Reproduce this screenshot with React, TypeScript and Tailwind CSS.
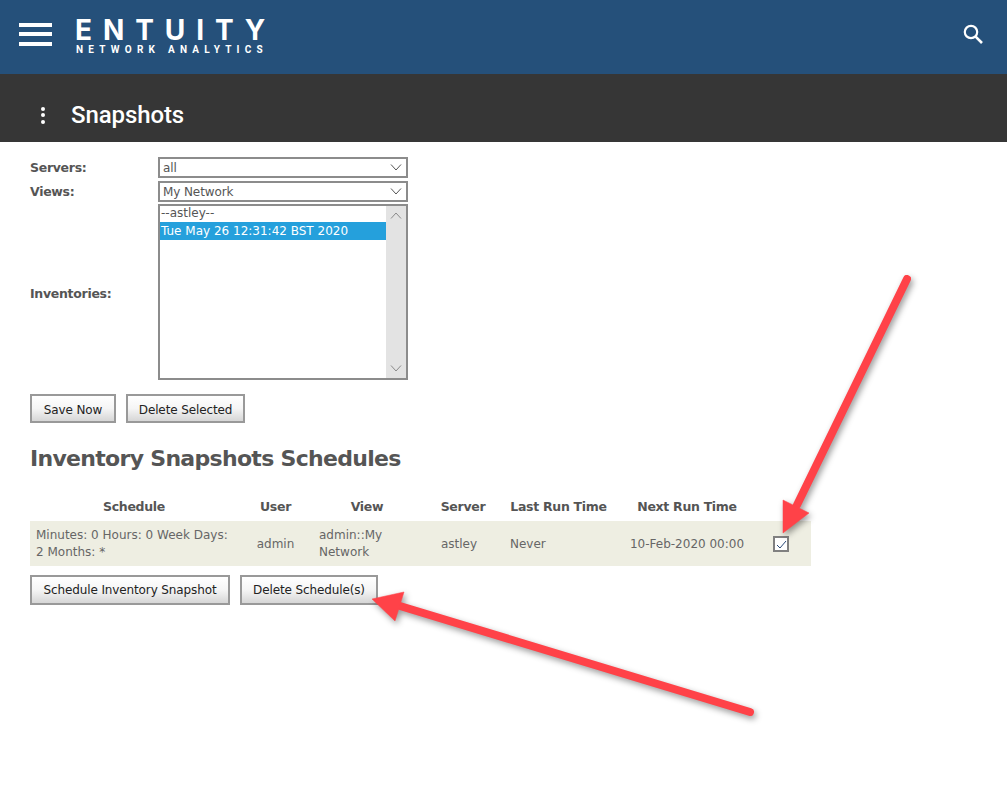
import React from "react";

const font = "font-['DejaVu_Sans','Liberation_Sans',sans-serif]";

function Chevron({ up = false, color = "#555" }: { up?: boolean; color?: string }) {
  return (
    <svg width="12" height="7" viewBox="0 0 12 7" fill="none" stroke={color} strokeWidth="1">
      <path d={up ? "M1 6.5 L6 1 L11 6.5" : "M1 .5 L6 6 L11 .5"} />
    </svg>
  );
}

function Select({ value }: { value: string }) {
  return (
    <div className="flex h-[21px] w-[250px] items-center justify-between border-2 border-[#8c8c8c] pl-[3px] pr-[4px] text-[12px] tracking-[-0.1px] text-[#555]">
      <span>{value}</span>
      <Chevron />
    </div>
  );
}

function Btn({ children, className }: { children: React.ReactNode; className: string }) {
  return (
    <button className={`flex items-center justify-center border-2 border-[#999] bg-gradient-to-b from-white via-[#f5f5f5] to-[#d6d6d6] text-[12px] tracking-[-0.12px] text-[#222] ${className}`}>
      {children}
    </button>
  );
}

const headers = ["Schedule", "User", "View", "Server", "Last Run Time", "Next Run Time", ""];

const cols = "grid grid-cols-[208px_75px_108px_84px_107px_150px_49px]";
const label = "w-[128px] pt-[2px] text-[12.5px] font-bold tracking-[-0.3px] text-[#555]";

export default function App() {
  return (
    <div className={`relative h-[792px] w-[1007px] overflow-hidden bg-white ${font}`}>
      <header className="flex h-[74px] items-center justify-between bg-[#25507a] pl-[19px] pr-[22px]">
        <div className="flex items-center">
          <div className="mb-[6px] flex w-[33px] flex-col gap-[5.5px]">
            <div className="h-[4px] bg-white" />
            <div className="h-[4px] bg-white" />
            <div className="h-[4px] bg-white" />
          </div>
          <div className="ml-[23px] flex flex-col font-['Inter',sans-serif] text-white">
            <div className="text-[28px] font-bold leading-[20px] tracking-[10.9px]">ENTUITY</div>
            <div className="ml-px mt-[6px] font-['Roboto',sans-serif] text-[10px] font-bold leading-[8px] tracking-[5.25px]">NETWORK ANALYTICS</div>
          </div>
        </div>
        <svg width="24" height="24" viewBox="0 0 24 24" fill="none" stroke="white" strokeWidth="2.2" className="mt-[-6px]">
          <circle cx="10" cy="10" r="6.2" />
          <path d="M14.6 14.6 L21 21" strokeWidth="2.6" />
        </svg>
      </header>

      <div className="flex h-[68px] items-center bg-[#363636] pl-[40px] pt-[14px] font-['Roboto',sans-serif] text-white">
        <div className="flex w-[6px] flex-col items-center gap-[2.5px]">
          <div className="h-[4px] w-[4px] rounded-full bg-white" />
          <div className="h-[4px] w-[4px] rounded-full bg-white" />
          <div className="h-[4px] w-[4px] rounded-full bg-white" />
        </div>
        <div className="ml-[25px] text-[24px] font-medium leading-none tracking-[-0.1px]">Snapshots</div>
      </div>

      <main className="pl-[30px] pt-[15px]">
        <div className="flex h-[21px] items-center">
          <div className={label}>Servers:</div>
          <Select value="all" />
        </div>
        <div className="mt-[3px] flex h-[21px] items-center">
          <div className={label}>Views:</div>
          <Select value="My Network" />
        </div>
        <div className="mt-[2px] flex h-[176px] items-center">
          <div className={`${label} pt-[4px]`}>Inventories:</div>
          <div className="flex h-[176px] w-[250px] border-2 border-[#8c8c8c] text-[12px]">
            <div className="flex-1">
              <div className="h-[16px] pl-[1px] leading-[15px] text-[#555]">--astley--</div>
              <div className="h-[18px] bg-[#25a0dc] pl-[1px] leading-[18px] text-white">Tue May 26 12:31:42 BST 2020</div>
            </div>
            <div className="flex w-[20px] flex-col items-center justify-between bg-[#e3e3e3] py-[6px]">
              <Chevron up color="#8a8a8a" />
              <Chevron color="#8a8a8a" />
            </div>
          </div>
        </div>

        <div className="mt-[14px] flex gap-[10px]">
          <Btn className="h-[29px] w-[86px] pt-[2px]">Save Now</Btn>
          <Btn className="h-[29px] w-[119px] pt-[2px]">Delete Selected</Btn>
        </div>

        <h2 className="mt-[20px] text-[22px] font-bold leading-[32px] tracking-[-0.7px] text-[#555]">Inventory Snapshots Schedules</h2>

        <div className={`${cols} mt-[14px] h-[32px] w-[781px] pt-[4px] text-[12.5px] font-bold tracking-[-0.3px] text-[#555]`}>
          {headers.map((h, i) => (
            <div key={i} className="flex items-center justify-center">{h}</div>
          ))}
        </div>
        <div className={`${cols} h-[45px] w-[781px] bg-[#eeeee2] pt-px text-[12px] leading-[17px] text-[#666]`}>
          <div className="flex items-center pl-[6px]">
            <span>Minutes: 0 Hours: 0 Week Days: 2 Months: *</span>
          </div>
          <div className="flex items-center justify-center">admin</div>
          <div className="flex items-center pl-[6px] pr-[30px]">admin::My Network</div>
          <div className="flex items-center justify-center pr-[8px]">astley</div>
          <div className="flex items-center pl-[5px]">Never</div>
          <div className="flex items-center justify-center">10-Feb-2020 00:00</div>
          <div className="flex items-center pl-[11px]">
            <div className="flex h-[16px] w-[16px] items-center justify-center border-2 border-[#808080] bg-white">
              <svg width="11" height="9" viewBox="0 0 11 9" fill="none" stroke="#2a4a78" strokeWidth="1">
                <path d="M1 5 L4 8 L10 1" />
              </svg>
            </div>
          </div>
        </div>

        <div className="mt-[9px] flex gap-[10px]">
          <Btn className="h-[30px] w-[200px]">Schedule Inventory Snapshot</Btn>
          <Btn className="h-[30px] w-[138px]">Delete Schedule(s)</Btn>
        </div>
      </main>

      <svg className="pointer-events-none absolute left-0 top-0" width="1007" height="792" viewBox="0 0 1007 792" style={{ filter: "drop-shadow(2px 3px 3px rgba(0,0,0,0.4))" }}>
        <g fill="#ff4248" stroke="#ff4248">
          <path d="M907 279 L797 505" strokeWidth="8" strokeLinecap="round" fill="none" />
          <path d="M783 533 L783 500 L809 513 Z" strokeWidth="0.5" />
          <path d="M750 712 L400 606" strokeWidth="8" strokeLinecap="round" fill="none" />
          <path d="M372 599 L404 592 L395 621 Z" strokeWidth="0.5" />
        </g>
      </svg>
    </div>
  );
}
